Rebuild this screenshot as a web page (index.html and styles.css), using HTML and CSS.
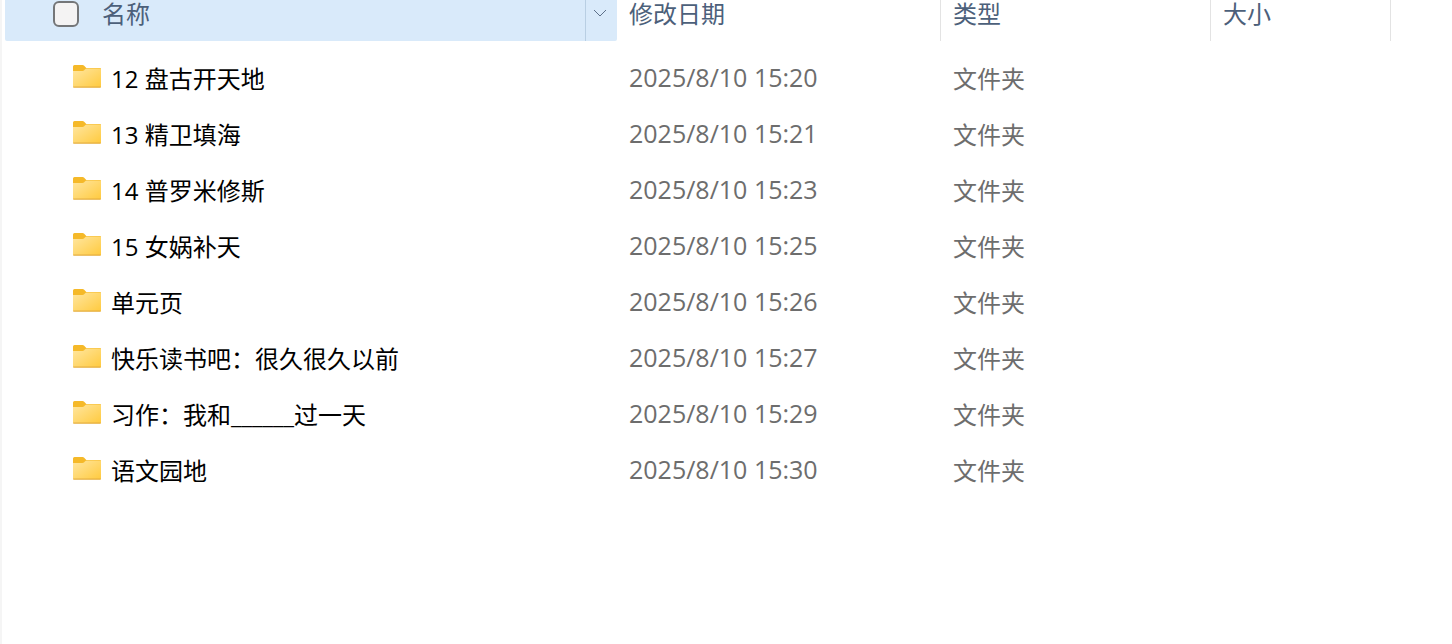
FILE: index.html
```html
<!DOCTYPE html>
<html lang="zh-CN">
<head>
<meta charset="utf-8">
<title>文件夹</title>
<link rel="stylesheet" href="styles.css">
</head>
<body>
<svg class="defs" aria-hidden="true">
  <defs>
    <linearGradient id="front" x1="0" y1="0" x2="1" y2="1">
      <stop offset="0" stop-color="#ffe6a0"/>
      <stop offset="1" stop-color="#ffca3e"/>
    </linearGradient>
    <symbol id="folder" viewBox="0 0 28 23">
      <path d="M0 1.500Q0 0 1.500 0H9.500Q10.500 0 11.200 .7L13.300 3H27Q28 3 28 4V12H0Z" fill="#f5b929"/>
      <path d="M0 6H9.500Q10.500 6 11.200 5.300L12.100 4.300Q12.800 3.600 13.800 3.600H27.200Q28 3.600 28 4.400V21.700Q28 22.500 27.200 22.500H.8Q0 22.500 0 21.700Z" fill="url(#front)"/>
      <path d="M.3 22.100H27.700" fill="none" stroke="#dfa63c" stroke-width="1"/>
    </symbol>
  </defs>
</svg>
<main class="pane">
  <table class="files">
    <colgroup><col class="col-name"><col class="col-date"><col class="col-type"><col class="col-size"><col></colgroup>
    <thead>
      <tr>
        <th class="head-name" scope="col">
          <div class="name-bar">
            <input class="check" type="checkbox" aria-label="全选">
            <span class="name-label">名称</span>
            <button class="menu" type="button" aria-label="筛选">
              <svg class="chevron" viewBox="0 0 14 8" aria-hidden="true"><path d="M1 1L7 7L13 1" fill="none" stroke="#5d7089" stroke-width="1"/></svg>
            </button>
          </div>
        </th>
        <th scope="col">修改日期</th>
        <th scope="col">类型</th>
        <th scope="col">大小</th>
        <td></td>
      </tr>
    </thead>
    <tbody>
      <tr><td><div class="file"><svg class="icon" aria-hidden="true"><use href="#folder"/></svg><span>12 盘古开天地</span></div></td><td class="date">2025/8/10 15:20</td><td>文件夹</td><td></td><td></td></tr>
      <tr><td><div class="file"><svg class="icon" aria-hidden="true"><use href="#folder"/></svg><span>13 精卫填海</span></div></td><td class="date">2025/8/10 15:21</td><td>文件夹</td><td></td><td></td></tr>
      <tr><td><div class="file"><svg class="icon" aria-hidden="true"><use href="#folder"/></svg><span>14 普罗米修斯</span></div></td><td class="date">2025/8/10 15:23</td><td>文件夹</td><td></td><td></td></tr>
      <tr><td><div class="file"><svg class="icon" aria-hidden="true"><use href="#folder"/></svg><span>15 女娲补天</span></div></td><td class="date">2025/8/10 15:25</td><td>文件夹</td><td></td><td></td></tr>
      <tr><td><div class="file"><svg class="icon" aria-hidden="true"><use href="#folder"/></svg><span>单元页</span></div></td><td class="date">2025/8/10 15:26</td><td>文件夹</td><td></td><td></td></tr>
      <tr><td><div class="file"><svg class="icon" aria-hidden="true"><use href="#folder"/></svg><span>快乐读书吧：很久很久以前</span></div></td><td class="date">2025/8/10 15:27</td><td>文件夹</td><td></td><td></td></tr>
      <tr><td><div class="file"><svg class="icon" aria-hidden="true"><use href="#folder"/></svg><span>习作：我和______过一天</span></div></td><td class="date">2025/8/10 15:29</td><td>文件夹</td><td></td><td></td></tr>
      <tr><td><div class="file"><svg class="icon" aria-hidden="true"><use href="#folder"/></svg><span>语文园地</span></div></td><td class="date">2025/8/10 15:30</td><td>文件夹</td><td></td><td></td></tr>
    </tbody>
  </table>
</main>
</body>
</html>
```
FILE: styles.css
```css
* { box-sizing: border-box; }
body {
  margin: 0;
  background: #fff;
  font: 24px/32px "Open Sans", "Noto Sans CJK SC", sans-serif;
  color: #6d6d6d;
}
.defs { position: absolute; width: 0; height: 0; }
.pane {
  min-height: 100vh;
  padding-left: 3px;
  border-left: 2px solid #f5f5f5;
}
.files {
  width: 100%;
  table-layout: fixed;
  border-collapse: separate;
  border-spacing: 0;
}
.col-name { width: 612px; }
.col-date { width: 324px; }
.col-type { width: 270px; }
.col-size { width: 180px; }
th, td { padding: 0 12px; text-align: left; white-space: nowrap; }
th {
  height: 41px;
  padding-bottom: 13px;
  border-right: 1px solid #e3e3e3;
  font-weight: 400;
  line-height: 28px;
  color: #4c607a;
}
.head-name { padding: 0; border: 0; }
.name-bar {
  display: flex;
  height: 41px;
  padding-left: 48px;
  background: #d9eafa;
  border-radius: 0 0 2px 2px;
}
.check {
  appearance: none;
  width: 26px;
  height: 26px;
  margin: 1px 23px 0 0;
  border: 2px solid #747678;
  border-radius: 6px;
  background: #f4f3f3;
}
.name-label { flex: 1; }
.menu {
  display: flex;
  justify-content: center;
  width: 32px;
  padding: 9px 4px 0 0;
  border: 0;
  border-left: 1px solid #b9cfe3;
  background: transparent;
}
.chevron { width: 14px; height: 8px; }
tbody::before { content: ""; display: block; height: 10px; }
tbody td { height: 56px; }
.file {
  display: flex;
  align-items: center;
  gap: 10px;
  padding-left: 56px;
  color: #000;
}
.icon { width: 28px; height: 23px; margin-bottom: 5px; }
tbody .date { padding-bottom: 4px; font-size: 25px; }
```
